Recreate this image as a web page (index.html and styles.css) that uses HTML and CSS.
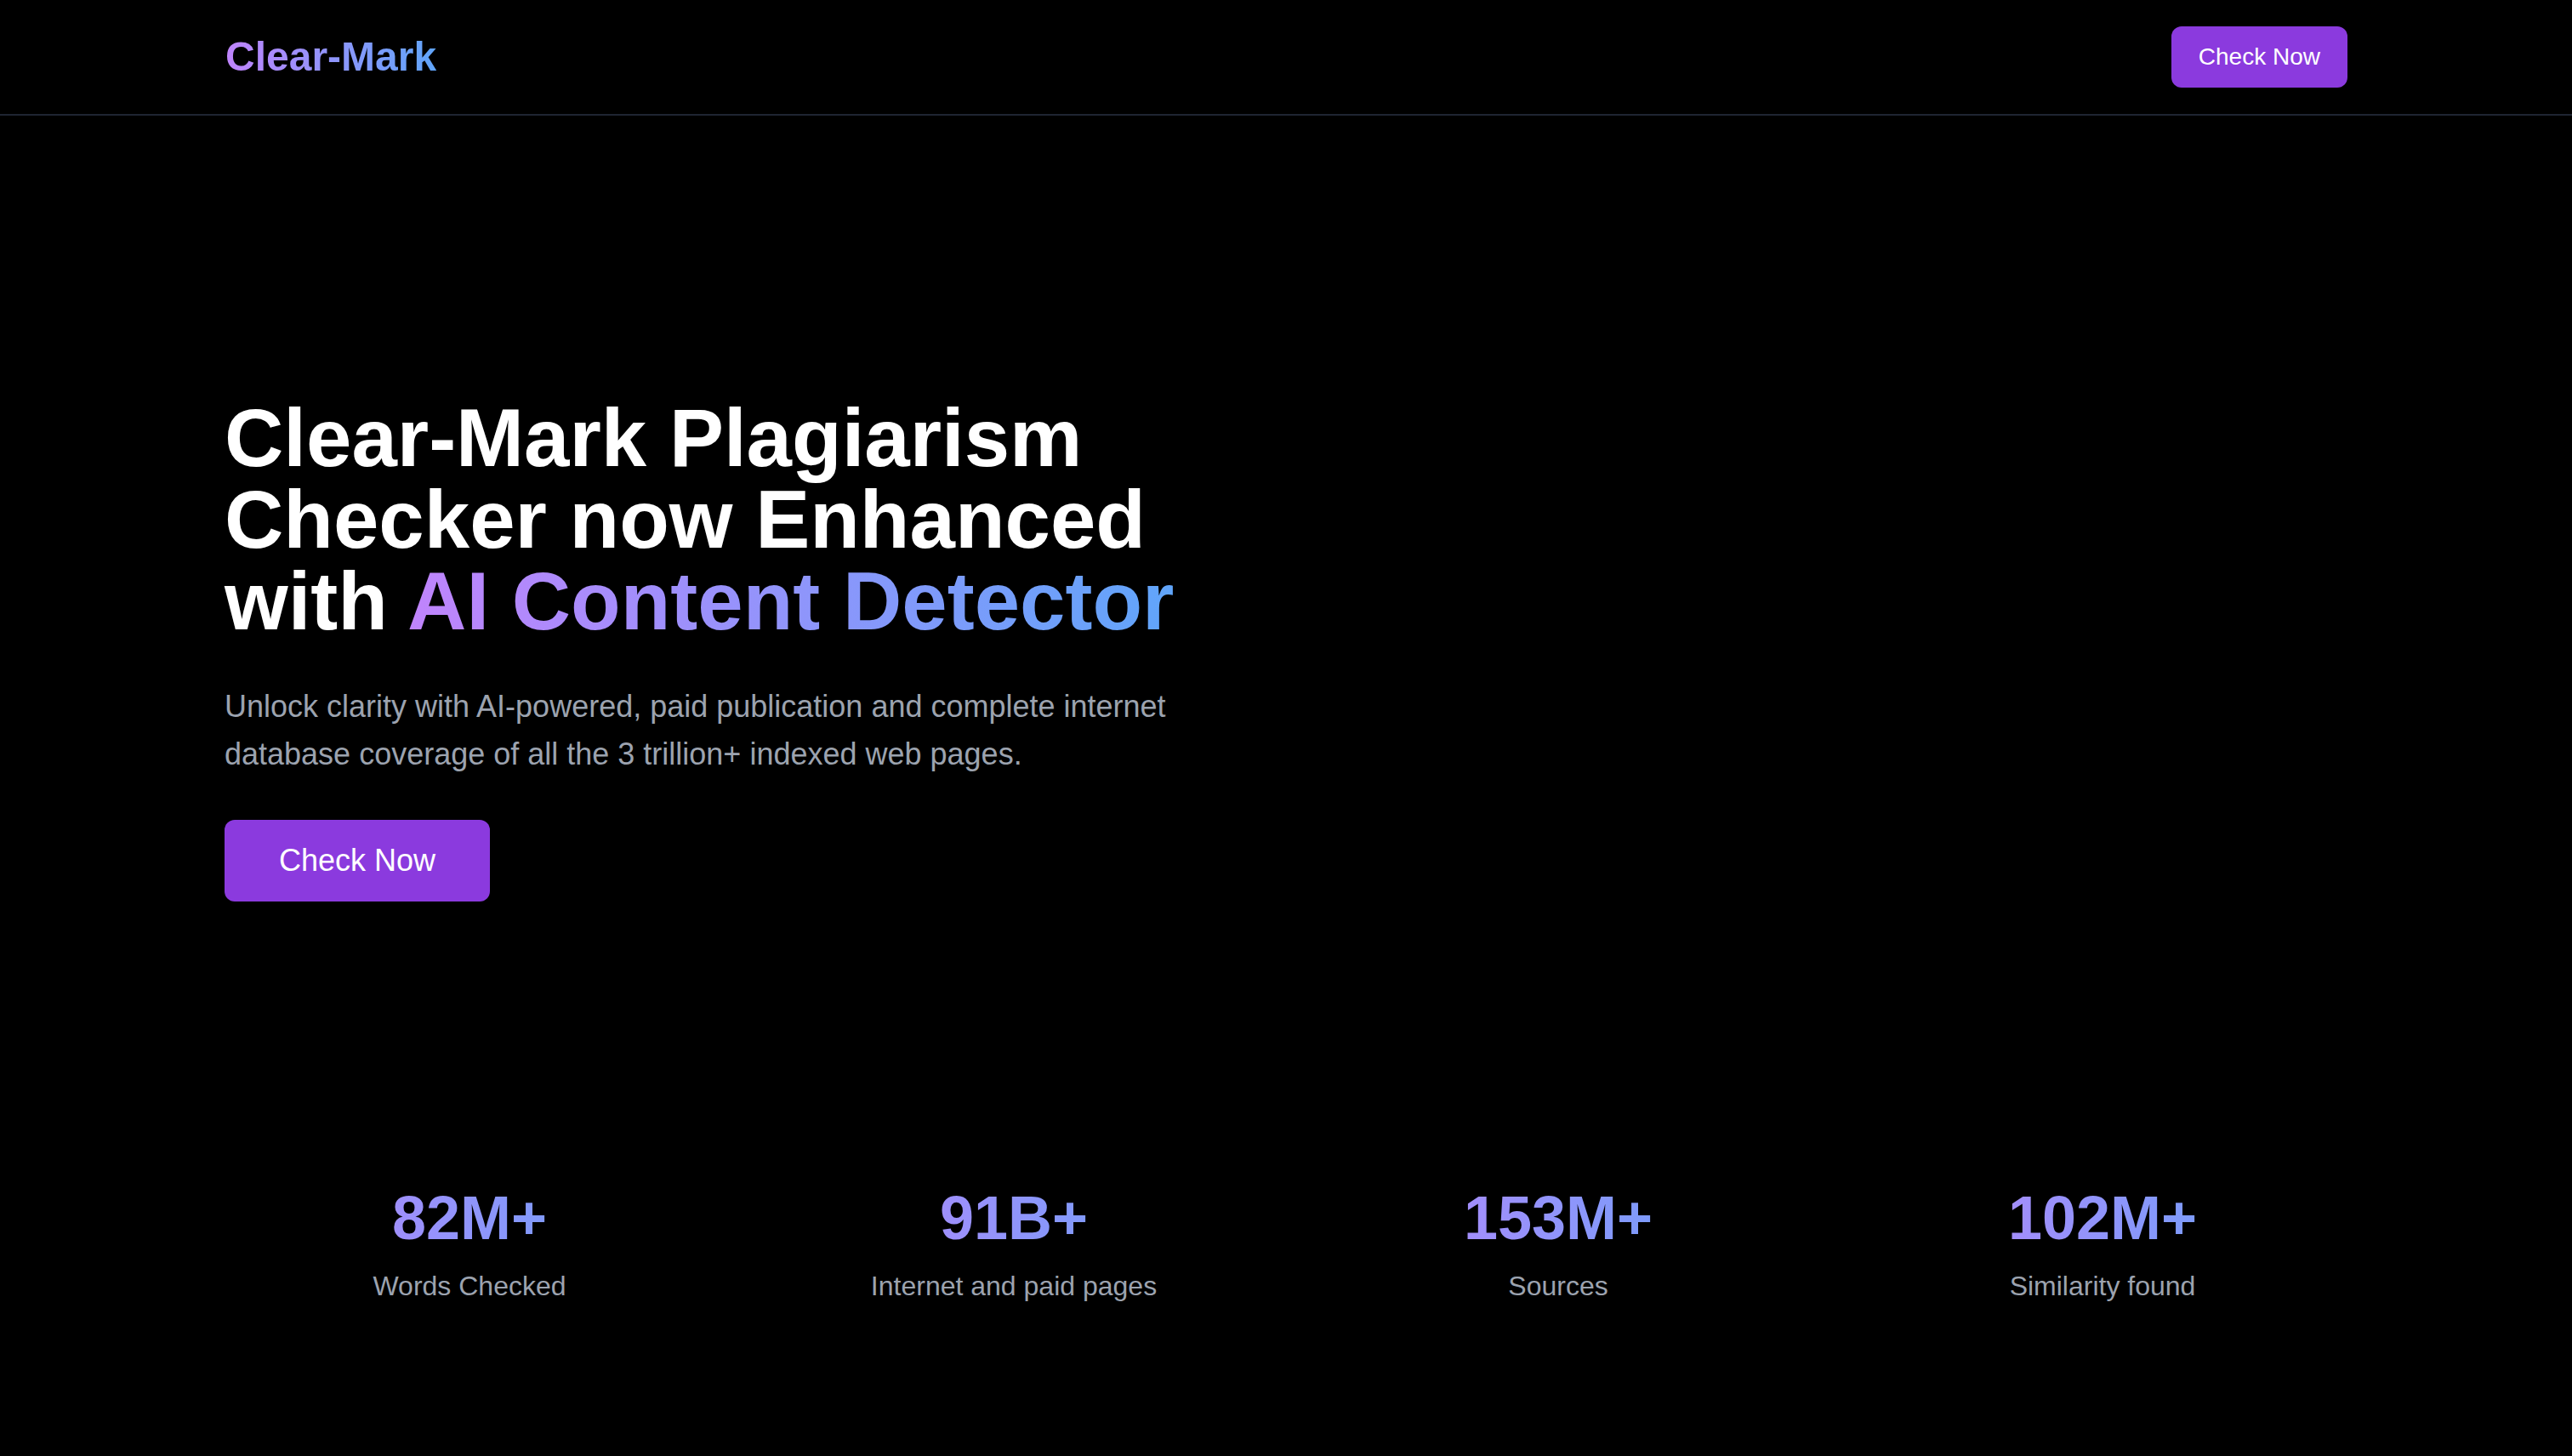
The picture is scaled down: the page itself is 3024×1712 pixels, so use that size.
FILE: index.html
```html
<!DOCTYPE html>
<html lang="en">
<head>
<meta charset="utf-8">
<title>Clear-Mark</title>
<link rel="stylesheet" href="styles.css">
</head>
<body>
<header class="site-header">
  <div class="container header-inner">
    <a class="logo" href="#">Clear-Mark</a>
    <a class="btn btn-small" href="#">Check Now</a>
  </div>
</header>
<main>
  <section class="hero">
    <div class="container hero-grid">
      <div class="hero-copy">
        <h1 class="hero-title">Clear-Mark Plagiarism Checker now Enhanced with <span class="grad">AI Content Detector</span></h1>
        <p class="hero-text">Unlock clarity with AI-powered, paid publication and complete internet database coverage of all the 3 trillion+ indexed web pages.</p>
        <a class="btn btn-large" href="#">Check Now</a>
      </div>
      <div class="hero-media"></div>
    </div>
  </section>
  <section class="stats">
    <div class="container stats-grid">
      <div class="stat"><div class="stat-num">82M+</div><div class="stat-label">Words Checked</div></div>
      <div class="stat"><div class="stat-num">91B+</div><div class="stat-label">Internet and paid pages</div></div>
      <div class="stat"><div class="stat-num">153M+</div><div class="stat-label">Sources</div></div>
      <div class="stat"><div class="stat-num">102M+</div><div class="stat-label">Similarity found</div></div>
    </div>
  </section>
</main>
</body>
</html>
```

FILE: styles.css
```css
* { box-sizing: border-box; }
html, body { margin: 0; padding: 0; }
body {
  background: #000;
  color: #fff;
  font-family: "Liberation Sans", Arial, sans-serif;
  min-height: 1712px;
}
a { text-decoration: none; }
.container {
  max-width: 2560px;
  margin: 0 auto;
  padding: 0 32px;
}
.site-header {
  border-bottom: 2px solid #1f2532;
}
.header-inner {
  display: flex;
  align-items: center;
  justify-content: space-between;
  height: 134px;
}
.logo {
  font-size: 48px;
  line-height: 64px;
  font-weight: 700;
  background: linear-gradient(to right, #c084fc, #60a5fa);
  -webkit-background-clip: text;
  background-clip: text;
  color: transparent;
  padding-left: 1px;
}
.btn {
  display: inline-block;
  background: #8b3ade;
  color: #fff;
  border-radius: 12px;
}
.btn-small {
  font-size: 28px;
  line-height: 40px;
  padding: 16px 32px;
}
.hero {
  padding-top: 331px;
  padding-bottom: 172px;
}
.hero-grid {
  display: grid;
  grid-template-columns: 1fr 1fr;
  gap: 64px;
}
.hero-title {
  margin: 0;
  font-size: 96px;
  line-height: 96px;
  font-weight: 700;
}
.grad {
  background: linear-gradient(to right, #c084fc, #60a5fa);
  -webkit-background-clip: text;
  background-clip: text;
  color: transparent;
}
.hero-text {
  margin: 48px 0 0;
  font-size: 36px;
  line-height: 56px;
  color: #9ca3af;
}
.btn-large {
  margin-top: 49px;
  font-size: 36px;
  line-height: 56px;
  padding: 20px 64px;
}
.stats {
  padding-top: 160px;
  padding-bottom: 160px;
}
.stats-grid {
  display: grid;
  grid-template-columns: repeat(4, 1fr);
  gap: 64px;
  text-align: center;
}
.stat-num {
  font-size: 72px;
  line-height: 80px;
  font-weight: 700;
  background: linear-gradient(to right, #c084fc, #60a5fa);
  -webkit-background-clip: text;
  background-clip: text;
  color: transparent;
}
.stat-label {
  margin-top: 16px;
  font-size: 32px;
  line-height: 48px;
  color: #9ca3af;
}
```
